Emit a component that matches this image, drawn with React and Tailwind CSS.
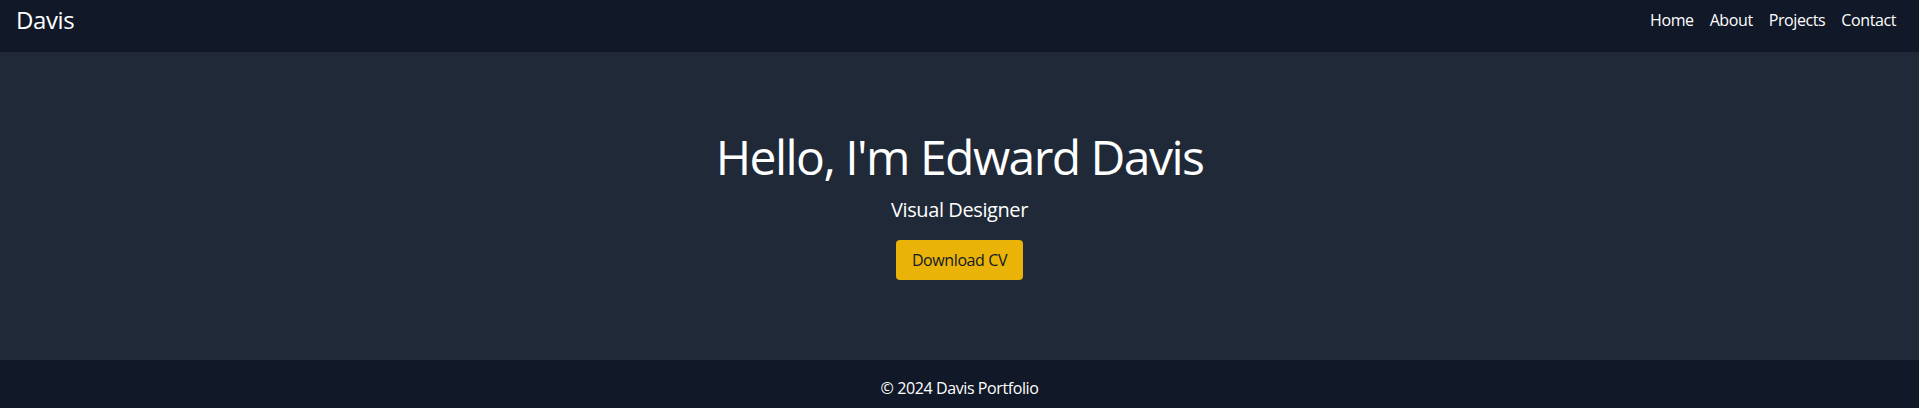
import React from 'react';

const links = ['Home', 'About', 'Projects', 'Contact'];

const App = () => {
    return (
        <div className="min-h-screen bg-[#1f2937] text-white font-['Open_Sans',sans-serif] tracking-tight">
            {/* Header */}
            <header className="bg-[#111827] pl-4 pr-[23px] pt-1 pb-4 flex justify-between items-center">
                <h1 className="text-2xl">Davis</h1>
                <nav>
                    <ul className="flex gap-4 text-base">
                        {links.map((link) => (
                            <li key={link}>
                                <a href={`#${link.toLowerCase()}`} className="hover:text-yellow-400">
                                    {link}
                                </a>
                            </li>
                        ))}
                    </ul>
                </nav>
            </header>

            {/* Hero */}
            <section className="py-20 text-center">
                <h2 className="text-5xl leading-none tracking-[-0.032em] mt-px mb-[15px]">Hello, I'm Edward Davis</h2>
                <p className="text-xl mb-4">Visual Designer</p>
                <button
                    type="button"
                    className="bg-[#eab308] text-[#111827] px-4 py-2 rounded text-base hover:bg-yellow-400"
                >
                    Download CV
                </button>
            </section>

            {/* Footer */}
            <footer className="bg-[#111827] p-4 text-center">
                <p>© 2024 Davis Portfolio</p>
            </footer>
        </div>
    );
};

export default App;
